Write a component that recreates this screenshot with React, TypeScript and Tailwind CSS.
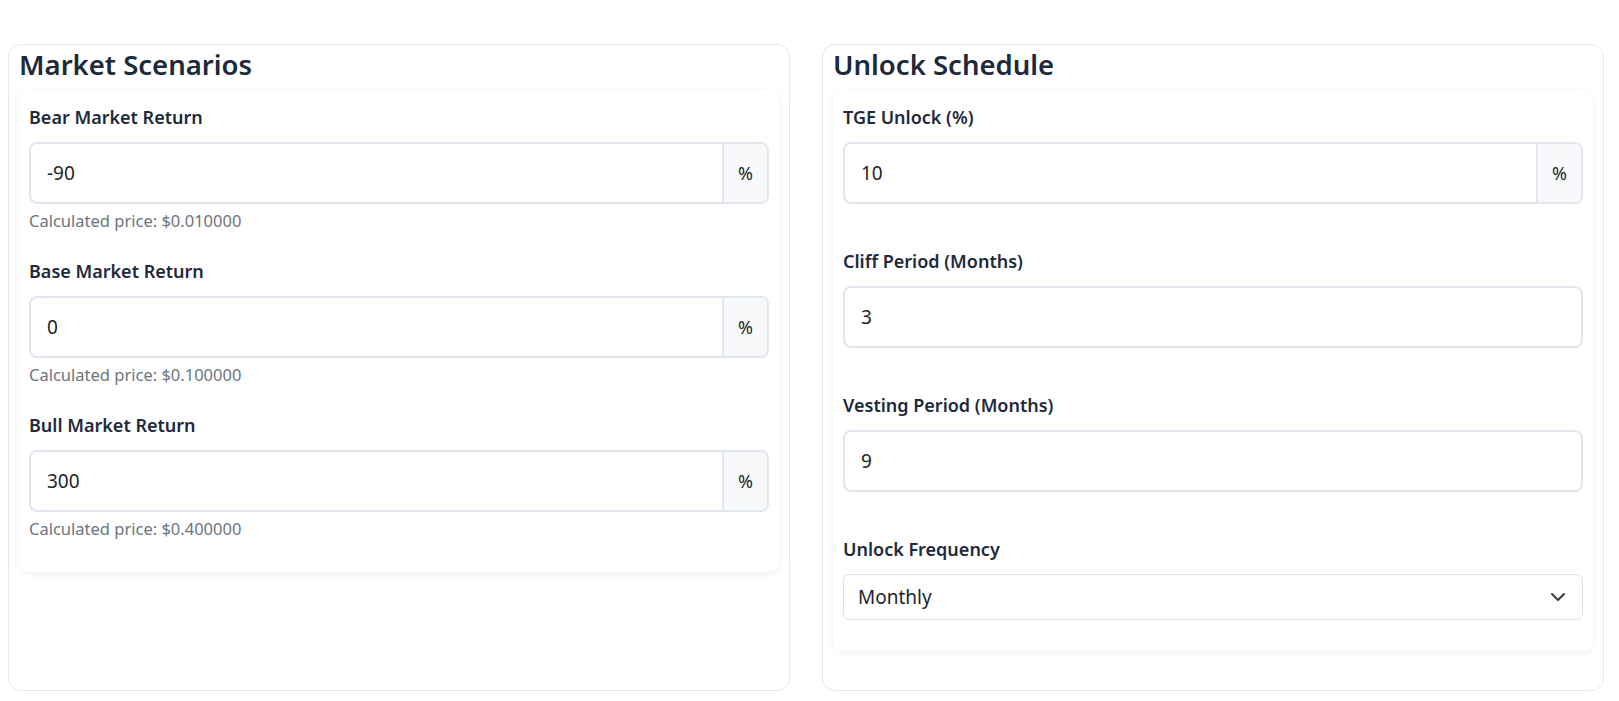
import React from 'react';

const font = { fontFamily: '"Noto Sans", "Open Sans", sans-serif' };

type Field = {
  label: string;
  value: string;
  suffix?: string;
  hint?: string;
};

const scenarios: Field[] = [
  { label: 'Bear Market Return', value: '-90', suffix: '%', hint: 'Calculated price: $0.010000' },
  { label: 'Base Market Return', value: '0', suffix: '%', hint: 'Calculated price: $0.100000' },
  { label: 'Bull Market Return', value: '300', suffix: '%', hint: 'Calculated price: $0.400000' },
];

const schedule: Field[] = [
  { label: 'TGE Unlock (%)', value: '10', suffix: '%' },
  { label: 'Cliff Period (Months)', value: '3' },
  { label: 'Vesting Period (Months)', value: '9' },
];

const Label: React.FC<{ children: React.ReactNode }> = ({ children }) => (
  <label className="block text-[18px] leading-[26px] font-semibold text-[#1e293b] mb-[12px]">{children}</label>
);

const InputField: React.FC<{ field: Field; spacing: string }> = ({ field, spacing }) => (
  <div className={spacing}>
    <Label>{field.label}</Label>
    <div className="flex h-[62px] border-2 border-[#e1e6ef] rounded-lg overflow-hidden bg-white">
      <input
        type="text"
        defaultValue={field.value}
        className="flex-1 min-w-0 px-4 text-[19px] text-[#212529] outline-none bg-transparent"
        style={font}
      />
      {field.suffix && (
        <span className="w-[45px] flex items-center justify-center border-l-2 border-[#e1e6ef] bg-[#f8f9fb] text-[18px] text-[#212529]">
          {field.suffix}
        </span>
      )}
    </div>
    {field.hint && <p className="mt-[5px] text-[16.5px] leading-[24px] text-[#6c757d]">{field.hint}</p>}
  </div>
);

const Panel: React.FC<{ title: string; children: React.ReactNode }> = ({ title, children }) => (
  <div className="border border-[#e2e8f0] rounded-[13px] px-[10px] pt-[2px] pb-[39px] bg-white">
    <h2 className="text-[27.5px] leading-[36px] font-semibold text-[#1e293b] mb-[7px]">{title}</h2>
    <div className="bg-white rounded-[10px] shadow-[0_2px_8px_rgba(0,0,0,0.06)] px-[10px] pt-[14px] pb-[31px]">
      {children}
    </div>
  </div>
);

export default function App() {
  return (
    <div className="min-h-screen bg-white pl-2 pt-[44px]" style={font}>
      <div className="grid grid-cols-2 gap-8 w-[1596px]">
        <Panel title="Market Scenarios">
          {scenarios.map((f, i) => (
            <InputField key={f.label} field={f} spacing={i < scenarios.length - 1 ? 'mb-[25px]' : ''} />
          ))}
        </Panel>

        <Panel title="Unlock Schedule">
          {schedule.map((f) => (
            <InputField key={f.label} field={f} spacing="mb-[44px]" />
          ))}
          <div>
            <Label>Unlock Frequency</Label>
            <div className="relative">
              <select
                defaultValue="monthly"
                className="w-full h-[46px] appearance-none border border-[#dee2e6] rounded-md pl-[14px] pr-10 text-[19px] text-[#212529] bg-white outline-none"
                style={font}
              >
                <option value="monthly">Monthly</option>
                <option value="quarterly">Quarterly</option>
                <option value="yearly">Yearly</option>
              </select>
              <svg
                className="pointer-events-none absolute right-[17px] top-1/2 -translate-y-1/2"
                width="16"
                height="16"
                viewBox="0 0 16 16"
                fill="none"
                stroke="#343a40"
                strokeWidth="2"
                strokeLinecap="round"
                strokeLinejoin="round"
              >
                <path d="m2 5 6 6 6-6" />
              </svg>
            </div>
          </div>
        </Panel>
      </div>
    </div>
  );
}
